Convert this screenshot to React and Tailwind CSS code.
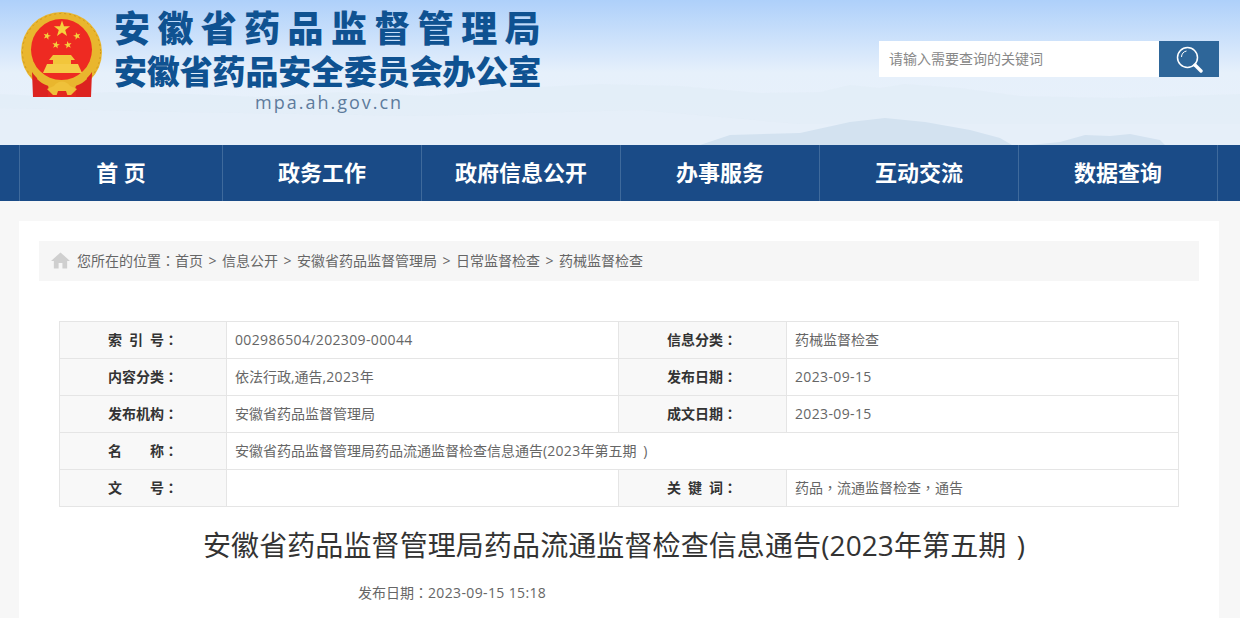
const navItems = [
  { label: "首\u00a0页", width: "w-[203px]" },
  { label: "政务工作", width: "w-[199px]" },
  { label: "政府信息公开", width: "w-[199px]" },
  { label: "办事服务", width: "w-[199px]" },
  { label: "互动交流", width: "w-[199px]" },
  { label: "数据查询", width: "w-[199px]" },
];

const crumbs = ["首页", "信息公开", "安徽省药品监督管理局", "日常监督检查", "药械监督检查"];

function Mark({ children }) {
  // TC face keeps full-width punctuation centred in the cell
  return <span className="font-['Noto_Sans_CJK_TC',sans-serif]">{children}</span>;
}

function Num({ children }) {
  return <span className="tracking-[0.36px]">{children}</span>;
}

function Star({ x, y, r, rot = 0 }) {
  const pts = [];
  for (let i = 0; i < 10; i++) {
    const rad = i % 2 === 0 ? r : r * 0.4;
    const a = ((i * 36 - 90 + rot) * Math.PI) / 180;
    pts.push(`${(x + rad * Math.cos(a)).toFixed(2)},${(y + rad * Math.sin(a)).toFixed(2)}`);
  }
  return <polygon points={pts.join(" ")} fill="#f6d23c" />;
}

function Emblem() {
  return (
    <svg width="84" height="90" viewBox="0 0 84 90">
      <ellipse cx="41.5" cy="42" rx="40.5" ry="40" fill="#e9b62e" />
      <ellipse cx="41.5" cy="42" rx="39" ry="38.5" fill="none" stroke="#cf961c" strokeWidth="1" strokeDasharray="2 3" />
      <ellipse cx="41.5" cy="39.5" rx="30.5" ry="30.5" fill="#ee2a22" />
      <Star x={42} y={19} r={8.5} />
      <Star x={27} y={26} r={4} rot={15} />
      <Star x={57} y={26} r={4} rot={-15} />
      <Star x={36} y={35} r={4} rot={10} />
      <Star x={48} y={35} r={4} rot={-10} />
      <path d="M33 45 L51 45 L55 50 L51 50 L51 54 L33 54 L33 50 L29 50 Z" fill="#f2c63b" />
      <path d="M27 54 L58 54 L62 63 L23 63 Z" fill="#f5cc48" />
      <path d="M12 62 C16 68 22 73 28 75 L30 87 L13 87 Z" fill="#dc2320" />
      <path d="M72 62 C68 68 62 73 56 75 L54 87 L71 87 Z" fill="#dc2320" />
      <path d="M28 87 L56 87 L56 80 L28 80 Z" fill="#e3281f" />
      <path d="M19 65 C28 76 56 76 65 65 L67 69 C56 81 28 81 17 69 Z" fill="#e9b62e" />
      <path d="M27 79 L34 76 C38 70 46 70 50 76 L57 79 L51 85 L33 85 Z" fill="#efc13a" />
      <path d="M38 81 L46 81 L48 87 L36 87 Z" fill="#e3281f" />
    </svg>
  );
}

function Mountains() {
  return (
    <svg className="absolute inset-0" width="1240" height="145" viewBox="0 0 1240 145">
      <path d="M0 94 L40 96 L110 92 L190 94 L260 97 L340 92 L430 96 L520 88 L600 84 L680 86 L760 93 L820 92 L850 85 L880 88 L905 84 L960 88 L1020 96 L1120 98 L1240 94 L1240 145 L0 145 Z" fill="#dfeaf6" fillOpacity="0.4" />
      <path d="M0 108 L180 112 L420 116 L640 110 L800 124 L1240 124 L1240 145 L0 145 Z" fill="#e8f0f9" fillOpacity="0.5" />
      <path d="M700 145 L730 135 L800 133 L850 122 L885 118 L925 122 L970 130 L1000 138 L1012 145 Z" fill="#d3e2f0" />
      <path d="M1030 145 L1060 142 L1085 135 L1110 136 L1130 134 L1160 140 L1165 145 Z" fill="#d3e2f0" />
    </svg>
  );
}

function Label({ chars }) {
  return (
    <td className="w-[167px] border border-[#e5e5e5] bg-[#f8f8f8] pb-[2px] pl-[48px] text-[14px] font-bold text-[#333]">
      <span className="flex">
        <span className="flex w-[56px] justify-between">
          {chars.map((c) => (
            <span key={c}>{c}</span>
          ))}
        </span>
        <Mark>：</Mark>
      </span>
    </td>
  );
}

function Value({ children, span }) {
  return (
    <td colSpan={span} className="border border-[#e5e5e5] pb-[2px] pl-[8px] text-[14px] text-[#666]">
      {children}
    </td>
  );
}

export default function App() {
  return (
    <div className="h-[618px] overflow-hidden bg-[#f7f7f7] font-['Open_Sans','Noto_Sans_CJK_SC',sans-serif]">
      <header className="relative h-[145px] bg-gradient-to-b from-[#aed0fa] via-[#e6f0fb] to-[#e9f1fa]">
        <Mountains />
        <div className="relative flex h-full items-start">
          <div className="ml-[20px] mt-[10px]">
            <Emblem />
          </div>
          <div className="ml-[10px] flex flex-col">
            <div className="mt-[4px] whitespace-nowrap text-[36px] font-black leading-[50px] tracking-[7.4px] text-[#0f5291]">安徽省药品监督管理局</div>
            <div className="-mt-[1px] whitespace-nowrap text-[33px] font-black leading-[38px] tracking-[-0.15px] text-[#0f5291]">安徽省药品安全委员会办公室</div>
            <div className="ml-[141px] text-[18px] leading-[22px] tracking-[2px] text-[#5d7b9c]">mpa.ah.gov.cn</div>
          </div>
          <div className="ml-auto mr-[21px] mt-[41px] flex h-[36px] w-[340px]">
            <div className="flex flex-1 items-center bg-white pb-[2px] pl-[10px] text-[14px] text-[#888]">请输入需要查询的关键词</div>
            <div className="flex w-[60px] items-center justify-center bg-[#2e6699]">
              <svg width="27" height="27" viewBox="0 0 27 27" fill="none" stroke="#fff">
                <circle cx="11.5" cy="11.5" r="10" strokeWidth="1.5" />
                <path d="M5.5 11 C5.5 8 7.5 5.5 10.5 5" strokeWidth="1" />
                <path d="M19 19 L25 25" strokeWidth="3.4" strokeLinecap="round" />
              </svg>
            </div>
          </div>
        </div>
      </header>

      <nav className="flex h-[56px] bg-[#1a4b87] pl-[19px]">
        {navItems.map((item) => (
          <div key={item.label} className={`${item.width} flex items-center justify-center border-l border-[#3f6a9c] pb-[1px] text-[22px] font-bold text-white`}>
            {item.label}
          </div>
        ))}
        <div className="border-l border-[#3f6a9c]" />
      </nav>

      <main className="mx-[19px] mt-[20px] h-[397px] w-[1200px] bg-white px-[20px] pt-[20px]">
        <div className="flex h-[40px] items-center bg-[#f6f6f6] pb-[1px] pl-[12px] text-[14px] text-[#666]">
          <svg width="19" height="17" viewBox="0 0 20 17" className="mr-[7px]">
            <path d="M10 0 L20 9 L17 9 L17 17 L12 17 L12 11 L8 11 L8 17 L3 17 L3 9 L0 9 Z" fill="#cfcfcf" />
          </svg>
          <span>您所在的位置<Mark>：</Mark></span>
          {crumbs.map((c, i) => (
            <span key={c} className="flex">
              {i > 0 && <span className="mx-[5.5px]">&gt;</span>}
              {c}
            </span>
          ))}
        </div>

        <table className="mx-[20px] mt-[40px] w-[1119px] table-fixed border-collapse">
          <colgroup>
            <col className="w-[167px]" />
            <col className="w-[392px]" />
            <col className="w-[168px]" />
            <col className="w-[392px]" />
          </colgroup>
          <tbody>
            <tr className="h-[37px]">
              <Label chars={["索", "引", "号"]} />
              <Value><Num>002986504/202309-00044</Num></Value>
              <Label chars={[..."信息分类"]} />
              <Value>药械监督检查</Value>
            </tr>
            <tr className="h-[37px]">
              <Label chars={[..."内容分类"]} />
              <Value>依法行政,通告,<Num>2023</Num>年</Value>
              <Label chars={[..."发布日期"]} />
              <Value><Num>2023-09-15</Num></Value>
            </tr>
            <tr className="h-[37px]">
              <Label chars={[..."发布机构"]} />
              <Value>安徽省药品监督管理局</Value>
              <Label chars={[..."成文日期"]} />
              <Value><Num>2023-09-15</Num></Value>
            </tr>
            <tr className="h-[37px]">
              <Label chars={["名", "称"]} />
              <Value span={3}>安徽省药品监督管理局药品流通监督检查信息通告(<Num>2023</Num>年第五期<span className="tracking-[3px]"> </span>)</Value>
            </tr>
            <tr className="h-[37px]">
              <Label chars={["文", "号"]} />
              <Value></Value>
              <Label chars={["关", "键", "词"]} />
              <Value>药品<Mark>，</Mark>流通监督检查<Mark>，</Mark>通告</Value>
            </tr>
          </tbody>
        </table>

        <h1 className="mt-[19px] pr-[10px] text-center text-[28px] leading-[38px] tracking-[0.1px] text-[#333]">安徽省药品监督管理局药品流通监督检查信息通告(2023年第五期<span className="tracking-[3px]"> </span>)</h1>
        <div className="ml-[319px] mt-[18px] pb-[1px] text-[14px] leading-[20px] text-[#666]">发布日期<Mark>：</Mark><Num>2023-09-15 15:18</Num></div>
      </main>
    </div>
  );
}
